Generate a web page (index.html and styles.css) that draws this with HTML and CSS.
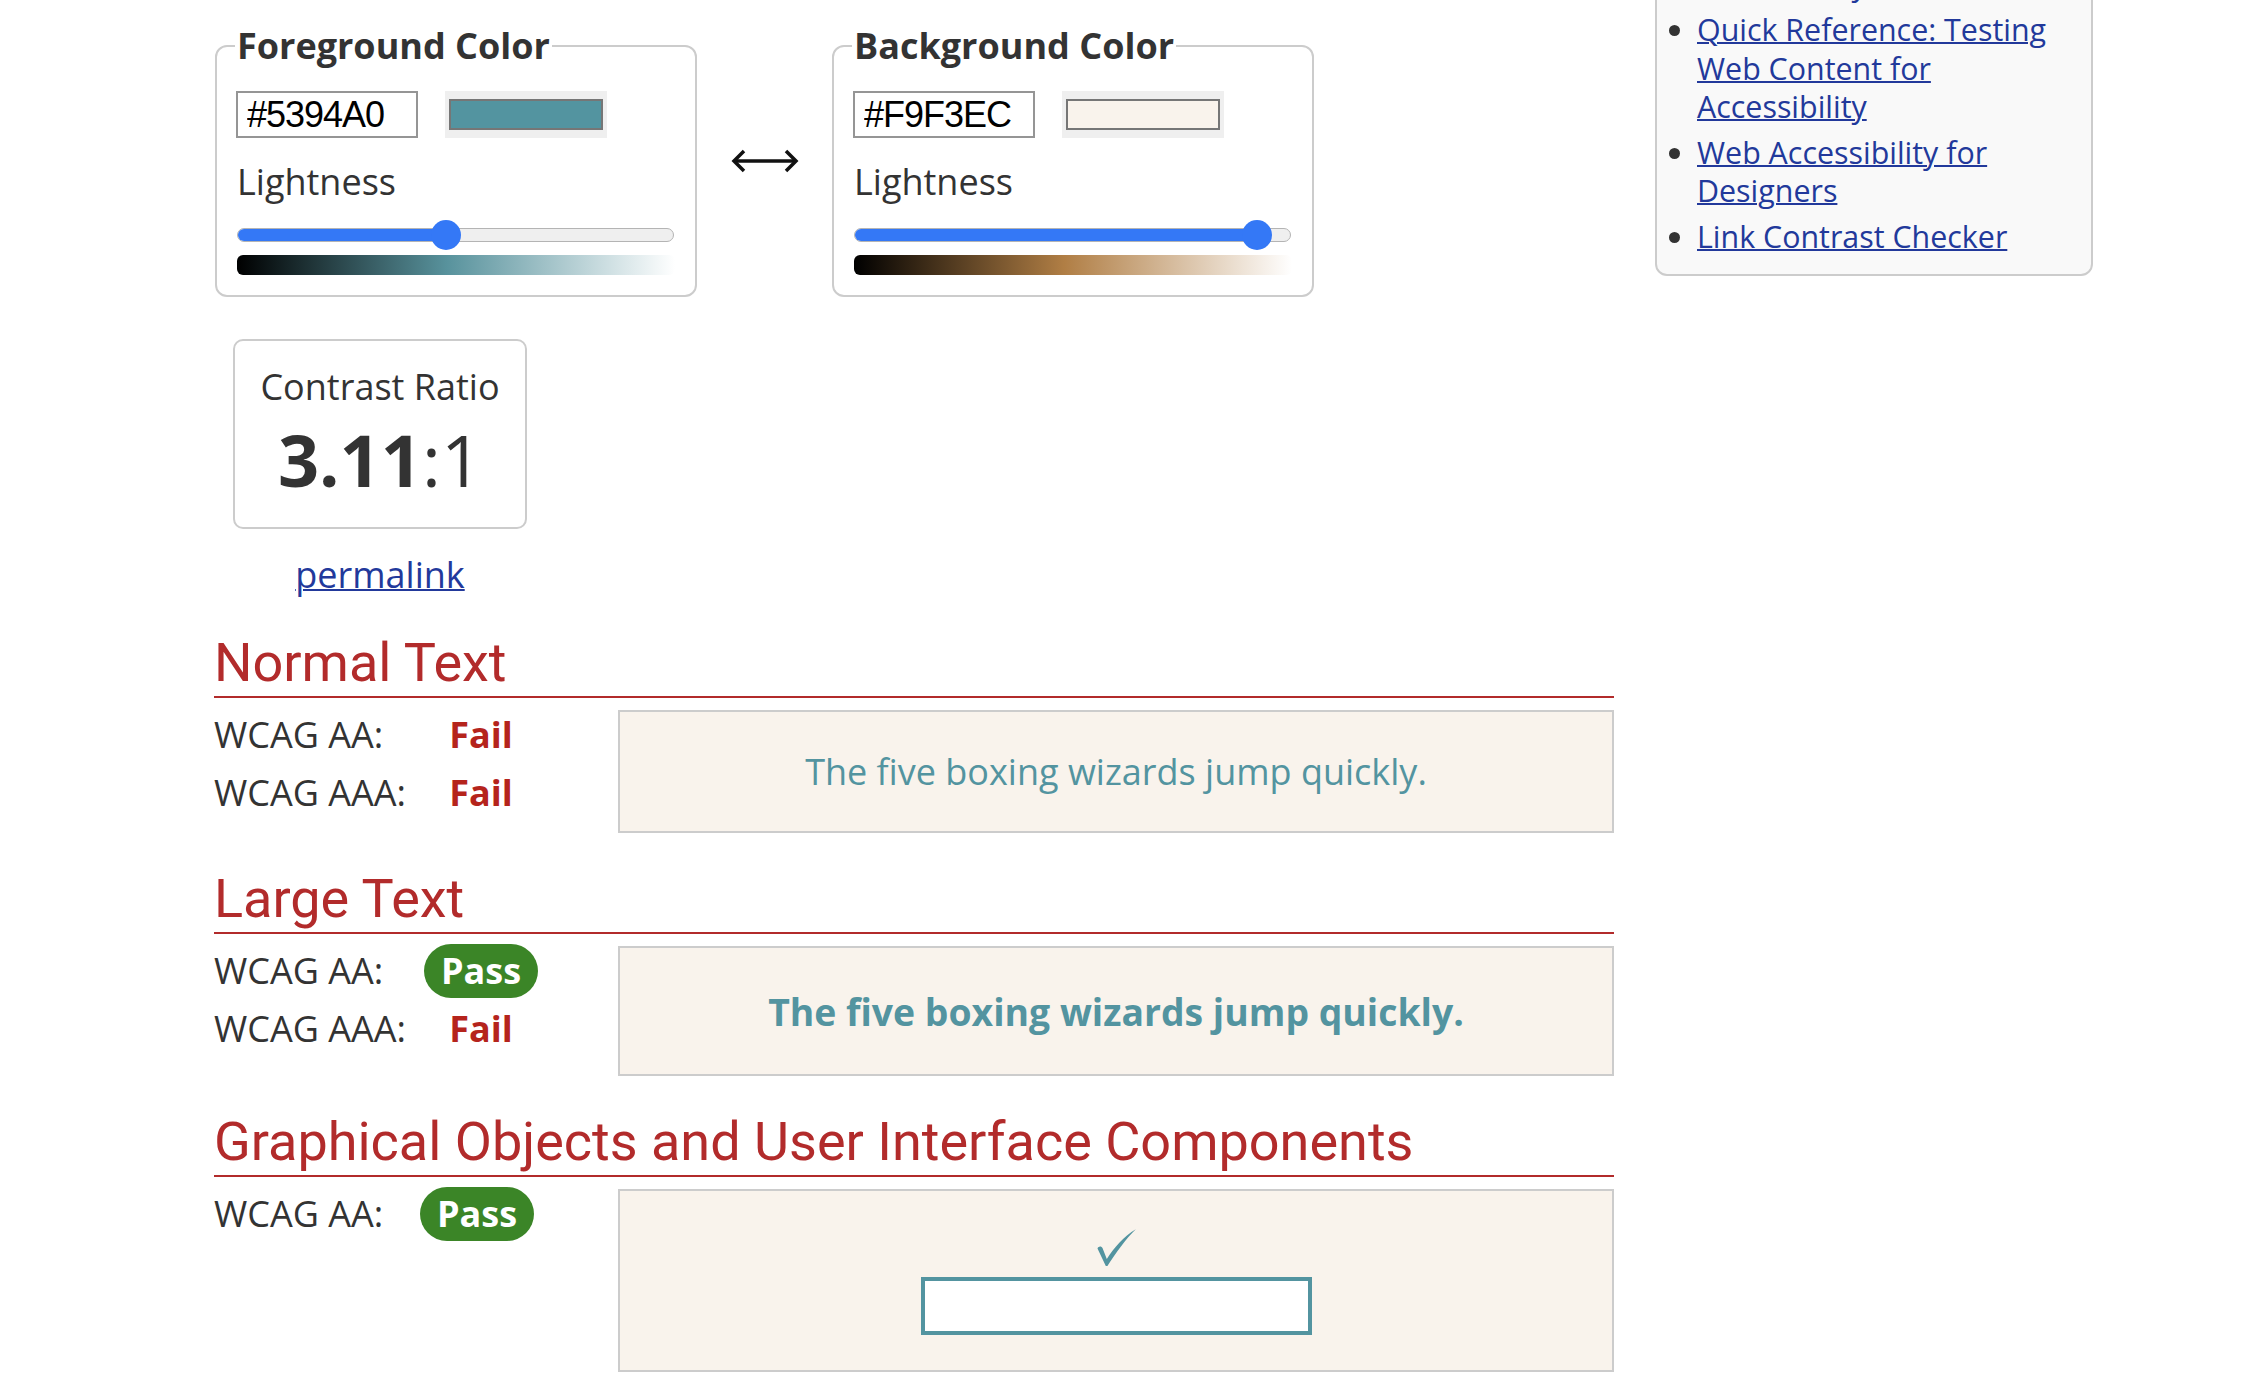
FILE: index.html
```html
<!DOCTYPE html>
<html lang="en">
<head>
<meta charset="utf-8">
<title>Contrast Checker</title>
<link rel="stylesheet" href="styles.css">
</head>
<body>
<div class="page">
  <main class="main">
    <div class="pickers">
      <fieldset class="picker picker-fg">
        <legend>Foreground Color</legend>
        <div class="hex-row">
          <input class="hex" type="text" value="#5394A0" aria-label="Foreground hex">
          <span class="swatch-well"><span class="swatch swatch-fg"></span></span>
        </div>
        <div class="light-label">Lightness</div>
        <div class="slider" style="--pos:0.476">
          <div class="track"><div class="fill"></div></div>
          <div class="thumb"></div>
        </div>
        <div class="grad grad-fg"></div>
      </fieldset>
      <div class="swap" aria-label="Swap colors">
        <svg width="68" height="28" viewBox="0 0 68 28" aria-hidden="true">
          <path d="M3 14 H65" stroke="#111" stroke-width="3.5" fill="none"/>
          <path d="M13 4 L3 14 L13 24" stroke="#111" stroke-width="3.5" fill="none" stroke-linejoin="miter"/>
          <path d="M55 4 L65 14 L55 24" stroke="#111" stroke-width="3.5" fill="none" stroke-linejoin="miter"/>
        </svg>
      </div>
      <fieldset class="picker picker-bg">
        <legend>Background Color</legend>
        <div class="hex-row">
          <input class="hex" type="text" value="#F9F3EC" aria-label="Background hex">
          <span class="swatch-well"><span class="swatch swatch-bg"></span></span>
        </div>
        <div class="light-label">Lightness</div>
        <div class="slider" style="--pos:0.951">
          <div class="track"><div class="fill"></div></div>
          <div class="thumb"></div>
        </div>
        <div class="grad grad-bg"></div>
      </fieldset>
    </div>

    <div class="ratio-wrap">
      <div class="ratio-box">
        <div class="ratio-label">Contrast Ratio</div>
        <div class="ratio-value"><b>3.11</b>:1</div>
      </div>
      <a class="permalink" href="#">permalink</a>
    </div>

    <section class="result">
      <h2>Normal Text</h2>
      <div class="result-body">
        <div class="checks">
          <div class="check-label">WCAG AA:</div><div class="check-val"><span class="fail">Fail</span></div>
          <div class="check-label">WCAG AAA:</div><div class="check-val"><span class="fail">Fail</span></div>
        </div>
        <div class="sample sample-normal">The five boxing wizards jump quickly.</div>
      </div>
    </section>

    <section class="result">
      <h2>Large Text</h2>
      <div class="result-body">
        <div class="checks">
          <div class="check-label">WCAG AA:</div><div class="check-val"><span class="pass">Pass</span></div>
          <div class="check-label">WCAG AAA:</div><div class="check-val"><span class="fail">Fail</span></div>
        </div>
        <div class="sample sample-large">The five boxing wizards jump quickly.</div>
      </div>
    </section>

    <section class="result">
      <h2>Graphical Objects and User Interface Components</h2>
      <div class="result-body">
        <div class="checks checks-ui">
          <div class="check-label">WCAG AA:</div><div class="check-val"><span class="pass">Pass</span></div>
        </div>
        <div class="sample sample-ui">
          <svg class="tick" width="40" height="37" viewBox="0 0 40 37" aria-hidden="true">
            <path d="M1.5 19.5 C2.5 17 5.5 16.8 6.6 19.3 L10.8 30 C18 19 28 7 39.8 0.3 C30 9.5 20 24 11.4 37 L9.8 37 Z" fill="#5394A0"/>
          </svg>
          <div class="ui-box"></div>
        </div>
      </div>
    </section>
  </main>

  <aside class="sidebar">
    <ul>
      <li><a href="#">Contrast and Color Accessibility</a></li>
      <li><a href="#">Quick Reference: Testing Web Content for Accessibility</a></li>
      <li><a href="#">Web Accessibility for Designers</a></li>
      <li><a href="#">Link Contrast Checker</a></li>
    </ul>
  </aside>
</div>
</body>
</html>
```

FILE: styles.css
```css
html, body {
  margin: 0;
  padding: 0;
  background: #fff;
}

body {
  font-family: "Open Sans", "Noto Sans", sans-serif;
  font-size: 36px;
  line-height: 49px;
  color: #333;
  overflow: hidden;
}

.page {
  display: flex;
  align-items: flex-start;
  gap: 41px;
  padding-left: 214px;
}

.main {
  flex: none;
  width: 1400px;
  padding-top: 21px;
}

/* ---------- colour pickers ---------- */
.pickers {
  display: flex;
  align-items: center;
}

.picker {
  flex: none;
  box-sizing: border-box;
  width: 482px;
  min-width: 0;
  margin: 0;
  border: 2px solid #ccc;
  border-radius: 12px;
  padding: 21px 20px 20px 20px;
}

.picker-fg {
  margin-left: 1px;
}

.picker legend {
  font-weight: 700;
  padding: 0 2px;
  margin-left: -2px;
  line-height: 49px;
  color: #333;
}

.swap {
  flex: none;
  width: 135px;
  display: flex;
  justify-content: center;
  padding-top: 4px;
}

.hex-row {
  display: flex;
  gap: 27px;
  height: 47px;
}

.hex {
  box-sizing: border-box;
  width: 182px;
  height: 47px;
  margin: 0 0 0 -1px;
  padding: 0 0 0 9px;
  border: 2px solid #959595;
  border-radius: 0;
  background: #fff;
  color: #000;
  font-family: "Liberation Sans", Arial, sans-serif;
  font-size: 36px;
  letter-spacing: -1px;
  outline: none;
}

.swatch-well {
  box-sizing: border-box;
  width: 162px;
  padding: 8px 4px;
  background: #efefef;
}

.swatch {
  display: block;
  box-sizing: border-box;
  height: 100%;
  border: 2px solid #767676;
}

.swatch-fg { background: #5394A0; }
.swatch-bg { background: #F9F3EC; }

.light-label {
  margin-top: 19px;
  line-height: 49px;
}

.slider {
  position: relative;
  margin-top: 14px;
  height: 30px;
  display: flex;
  align-items: center;
}

.track {
  flex: 1;
  display: flex;
  box-sizing: border-box;
  height: 14px;
  margin-right: 1px;
  border: 1px solid #b4b4b4;
  border-radius: 7px;
  background: #efefef;
  overflow: hidden;
}

.fill {
  width: calc(var(--pos) * (100% - 30px) + 15px);
  background: #3478f6;
}

.thumb {
  position: absolute;
  top: 0;
  left: calc(var(--pos) * (100% - 30px));
  width: 30px;
  height: 30px;
  border-radius: 50%;
  background: #3478f6;
}

.grad {
  margin-top: 5px;
  height: 20px;
  border-radius: 6px;
}

.grad-fg {
  background: linear-gradient(to right, #000 0%, hsl(189, 28%, 48%) 48%, #fff 100%);
}

.grad-bg {
  background: linear-gradient(to right, #000 0%, hsl(32, 44%, 48%) 48%, #fff 100%);
}

/* ---------- ratio ---------- */
.ratio-wrap {
  width: 294px;
  margin: 42px 0 0 19px;
  text-align: center;
}

.ratio-box {
  box-sizing: border-box;
  border: 2px solid #ccc;
  border-radius: 10px;
  padding: 21px 0 19px;
}

.ratio-label {
  line-height: 49px;
}

.ratio-value {
  margin-top: -1px;
  font-size: 72px;
  line-height: 98px;
}

.ratio-value b {
  font-weight: 700;
}

.permalink {
  display: inline-block;
  margin-top: 21px;
  color: #22399b;
  text-decoration: underline;
  text-decoration-thickness: 2px;
}

/* ---------- results ---------- */
.result {
  margin-top: 34px;
}

.ratio-wrap + .result {
  margin-top: 32px;
}

.result h2 {
  margin: 0;
  padding-bottom: 2px;
  border-bottom: 2px solid #b22b2b;
  font-family: Roboto, "Open Sans", sans-serif;
  font-weight: 400;
  font-size: 54px;
  line-height: 63px;
  color: #b22b2b;
}

.result-body {
  display: flex;
  align-items: flex-start;
  margin-top: 12px;
}

.checks {
  flex: none;
  width: 404px;
  display: grid;
  grid-template-columns: 200px 134px;
  grid-auto-rows: 50px;
  row-gap: 8px;
  line-height: 50px;
  white-space: nowrap;
}

.check-val {
  display: flex;
  align-items: center;
  justify-content: center;
}

.checks-ui .check-val {
  padding-right: 8px;
}

.fail {
  font-weight: 700;
  color: #b5241c;
}

.pass {
  flex: none;
  display: inline-block;
  height: 54px;
  line-height: 54px;
  padding: 0 16.5px;
  border-radius: 27px;
  background: #3b8527;
  color: #fff;
  font-weight: 700;
}

.sample {
  flex: 1;
  box-sizing: border-box;
  border: 2px solid #ccc;
  background: #F9F3EC;
  color: #5394A0;
  text-align: center;
}

.sample-normal {
  padding: 35px 0;
  line-height: 49px;
}

.sample-large {
  padding: 37.5px 0;
  font-size: 37.33px;
  line-height: 51px;
  font-weight: 700;
}

.sample-ui {
  display: flex;
  flex-direction: column;
  align-items: center;
  padding: 38px 0 35px;
}

.tick {
  display: block;
}

.ui-box {
  box-sizing: border-box;
  width: 391px;
  height: 58px;
  margin-top: 11px;
  border: 4px solid #5394A0;
  background: #fff;
}

/* ---------- sidebar ---------- */
.sidebar {
  flex: none;
  box-sizing: border-box;
  width: 438px;
  margin-top: -87px;
  padding: 12px 8px 11px 0;
  border: 2px solid #ccc;
  border-radius: 12px;
  background: #f9f9f9;
}

.sidebar ul {
  margin: 0;
  padding: 0 0 0 40px;
  font-size: 30.4px;
  line-height: 38.5px;
}

.sidebar li {
  margin-bottom: 7px;
}

.sidebar a {
  color: #22399b;
  text-decoration: underline;
  text-decoration-thickness: 2px;
}
```
